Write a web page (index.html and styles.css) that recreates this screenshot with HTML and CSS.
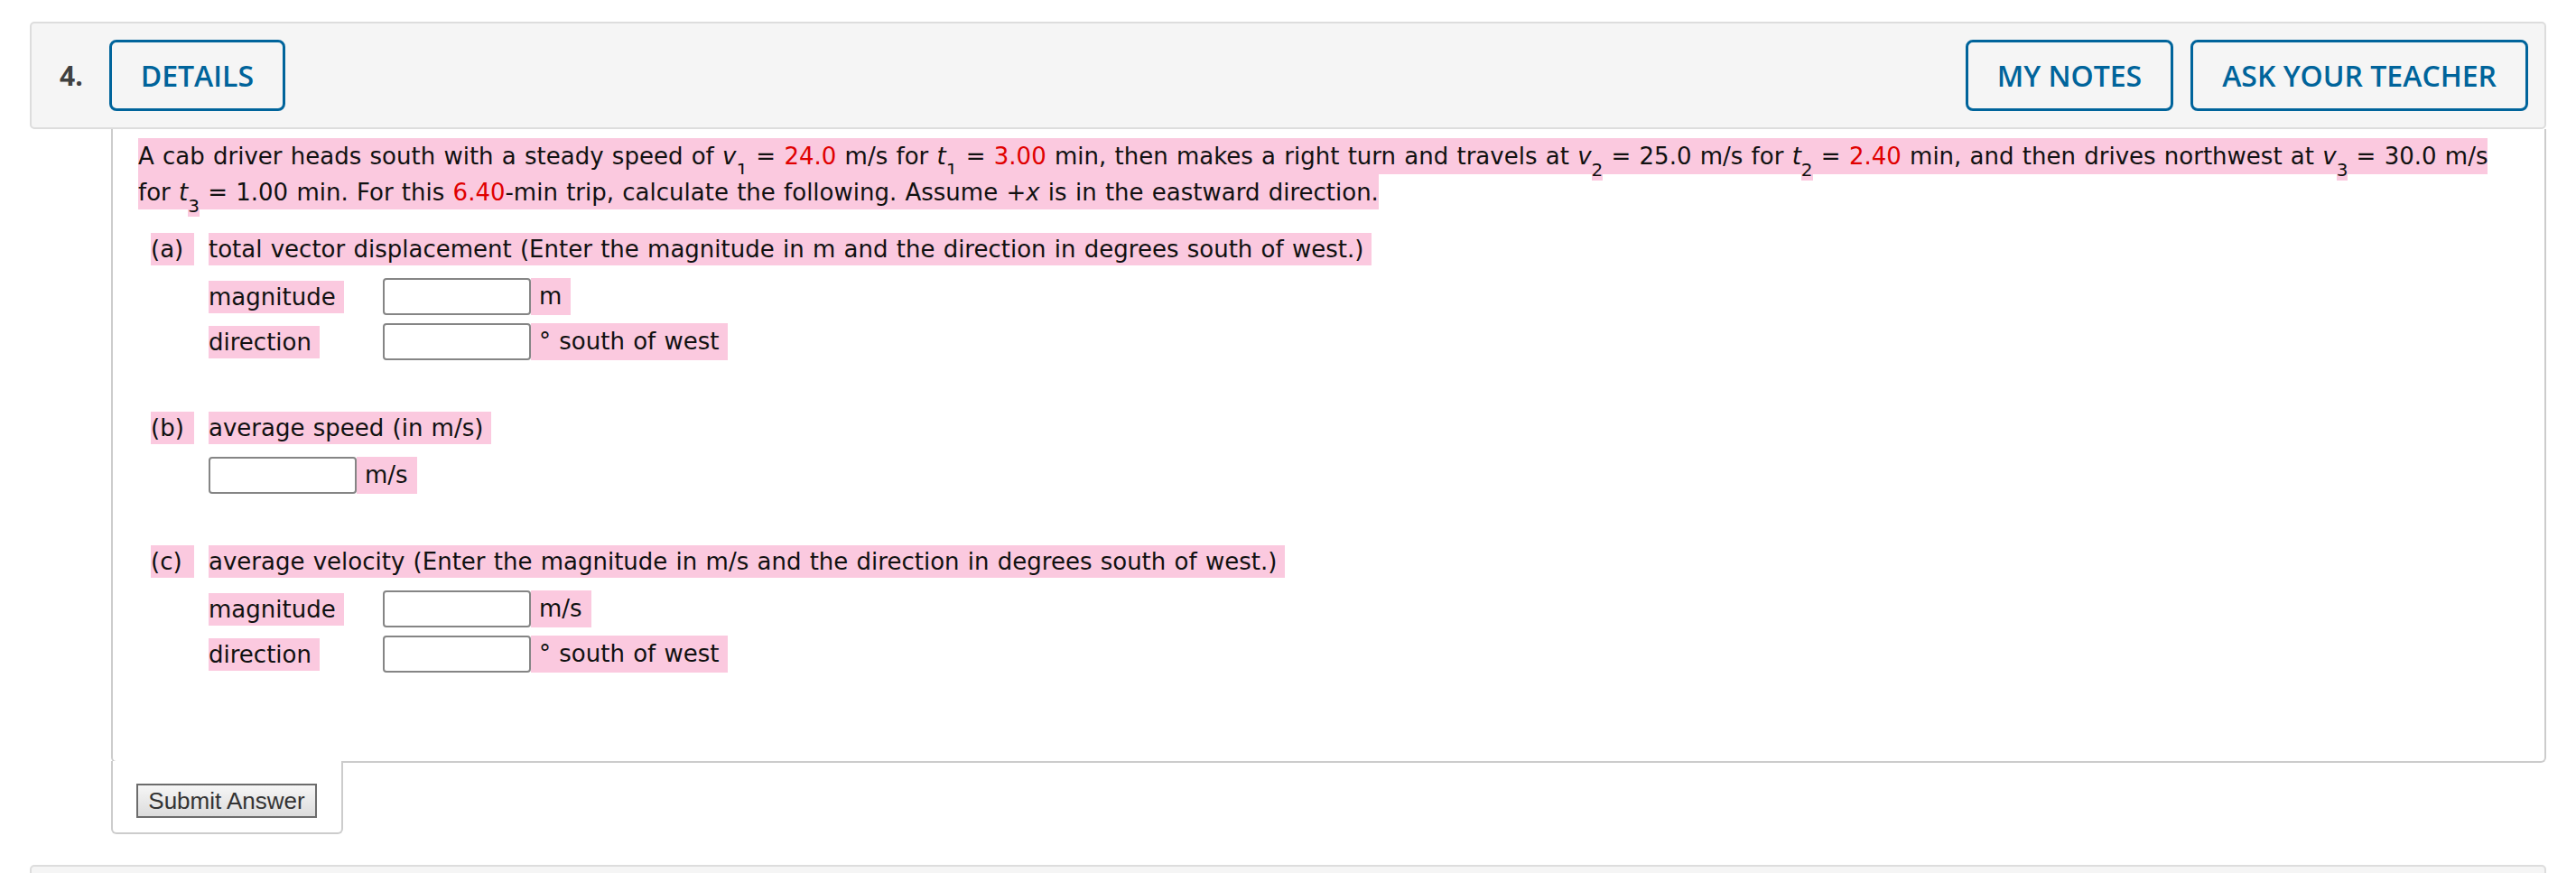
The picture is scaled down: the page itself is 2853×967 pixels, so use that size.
FILE: index.html
```html
<!DOCTYPE html>
<html lang="en">
<head>
<meta charset="utf-8">
<title>Question 4</title>
<link rel="stylesheet" href="styles.css">
</head>
<body>
<div class="item">
  <div class="item-head">
    <span class="qnum">4.</span>
    <button class="hbtn">DETAILS</button>
    <div class="head-right">
      <button class="hbtn">MY NOTES</button>
      <button class="hbtn">ASK YOUR TEACHER</button>
    </div>
  </div>
  <div class="item-body">
    <p class="stem"><span class="hl">A cab driver heads south with a steady speed of <i class="var">v</i><sub class="sb">1</sub> = <span class="red">24.0</span> m/s</span><span class="hl"> for <i class="var">t</i><sub class="sb">1</sub> = <span class="red">3.00</span> min,</span><span class="hl"> then makes a right turn and travels at <i class="var">v</i><sub class="sb">2</sub> = 25.0 m/s</span><span class="hl"> for <i class="var">t</i><sub class="sb">2</sub> = <span class="red">2.40</span> min,</span><span class="hl"> and then drives northwest at <i class="var">v</i><sub class="sb">3</sub> = 30.0 m/s for <i class="var">t</i><sub class="sb">3</sub> = 1.00 min.</span><span class="hl"> For this <span class="red">6.40</span>-min trip, calculate the following. Assume +<i class="var">x</i> is in the eastward direction.</span></p>

    <div class="part">
      <div class="part-title"><span class="hl plabel">(a)</span><span class="hl ptext">total vector displacement (Enter the magnitude in m and the direction in degrees south of west.)</span></div>
      <div class="field"><span class="flabel"><span class="hl ltext">magnitude</span></span><input class="ans" type="text"><span class="hl unit">m</span></div>
      <div class="field"><span class="flabel"><span class="hl ltext">direction</span></span><input class="ans" type="text"><span class="hl unit">° south of west</span></div>
    </div>

    <div class="part">
      <div class="part-title"><span class="hl plabel">(b)</span><span class="hl ptext">average speed (in m/s)</span></div>
      <div class="field"><input class="ans" type="text"><span class="hl unit">m/s</span></div>
    </div>

    <div class="part">
      <div class="part-title"><span class="hl plabel">(c)</span><span class="hl ptext">average velocity (Enter the magnitude in m/s and the direction in degrees south of west.)</span></div>
      <div class="field"><span class="flabel"><span class="hl ltext">magnitude</span></span><input class="ans" type="text"><span class="hl unit">m/s</span></div>
      <div class="field"><span class="flabel"><span class="hl ltext">direction</span></span><input class="ans" type="text"><span class="hl unit">° south of west</span></div>
    </div>
  </div>
  <div class="submit-tab"><button class="submit">Submit Answer</button></div>
</div>
<div class="item next">
  <div class="item-head empty"></div>
</div>
</body>
</html>
```

FILE: styles.css
```css
html, body {
  margin: 0;
  padding: 0;
  background: #ffffff;
}

body {
  font-family: "DejaVu Sans", Verdana, sans-serif;
  font-size: 26px;
  color: #111;
}

.item {
  margin: 24px 33px 0 33px;
}

.item.next {
  margin-top: 34px;
}

.item-head {
  display: flex;
  align-items: center;
  background: #f5f5f5;
  border: 2px solid #dddddd;
  border-radius: 5px;
  padding: 18px 18px 18px 31px;
}

.item-head.empty {
  height: 79px;
}

.qnum {
  font-family: "Open Sans", sans-serif;
  font-weight: 700;
  font-size: 30px;
  color: #404040;
  margin-right: 29px;
}

.hbtn {
  height: 79px;
  box-sizing: border-box;
  padding: 0 32px;
  background: transparent;
  border: 3px solid #00649b;
  border-radius: 8px;
  color: #00649b;
  font-family: "Open Sans", sans-serif;
  font-weight: 600;
  font-size: 32px;
  line-height: 1;
}

.head-right {
  margin-left: auto;
  display: flex;
  gap: 19px;
}

.item-body {
  margin-left: 90px;
  border: 2px solid #cccccc;
  border-top: 0;
  border-radius: 0 0 6px 6px;
  padding: 11px 28px 98px 28px;
}

.hl {
  background: #fbc9df;
}

.stem {
  margin: 0;
  line-height: 39.5px;
  word-spacing: 1px;
}

.stem .hl {
  padding: 4.6px 0;
}

.var {
  font-style: italic;
}

.sb {
  font-size: 20px;
  vertical-align: -13px;
  line-height: 0;
  background: #fbc9df;
}

.red {
  color: #e00000;
}

.part {
  margin: 57px 0 0 14px;
}

.stem + .part {
  margin-top: 25px;
}

.part-title {
  display: flex;
  align-items: center;
  height: 36px;
  word-spacing: 1px;
}

.part-title .hl {
  display: inline-block;
  line-height: 36px;
}

.plabel {
  width: 48px;
  margin-right: 16px;
}

.ptext {
  padding-right: 9px;
}

.field {
  display: flex;
  align-items: center;
  height: 41px;
  margin: 14px 0 0 64px;
  word-spacing: 1px;
}

.field + .field {
  margin-top: 9px;
}

.flabel {
  width: 193px;
}

.ltext {
  display: inline-block;
  line-height: 36px;
  padding-right: 9px;
}

.ans {
  width: 164px;
  height: 41px;
  box-sizing: border-box;
  margin: 0;
  border: 2px solid #858585;
  border-radius: 4px;
  background: #fff;
  padding: 0 6px;
  font: inherit;
}

.unit {
  display: inline-block;
  height: 41px;
  line-height: 41px;
  padding: 0 10px 0 9px;
}

.submit-tab {
  margin: -2px 0 0 90px;
  width: 257px;
  box-sizing: border-box;
  background: #fff;
  border: 2px solid #cccccc;
  border-top: 0;
  border-radius: 0 0 6px 6px;
  padding: 25px 0 16px 26px;
}

.submit {
  display: block;
  width: 200px;
  height: 38px;
  margin: 0;
  padding: 0;
  box-sizing: border-box;
  border: 2px solid #6c6c6c;
  background: linear-gradient(#f6f6f6, #dcdcdc);
  color: #333;
  font-family: "Liberation Sans", Arial, sans-serif;
  font-size: 26px;
  line-height: 1;
}
```
